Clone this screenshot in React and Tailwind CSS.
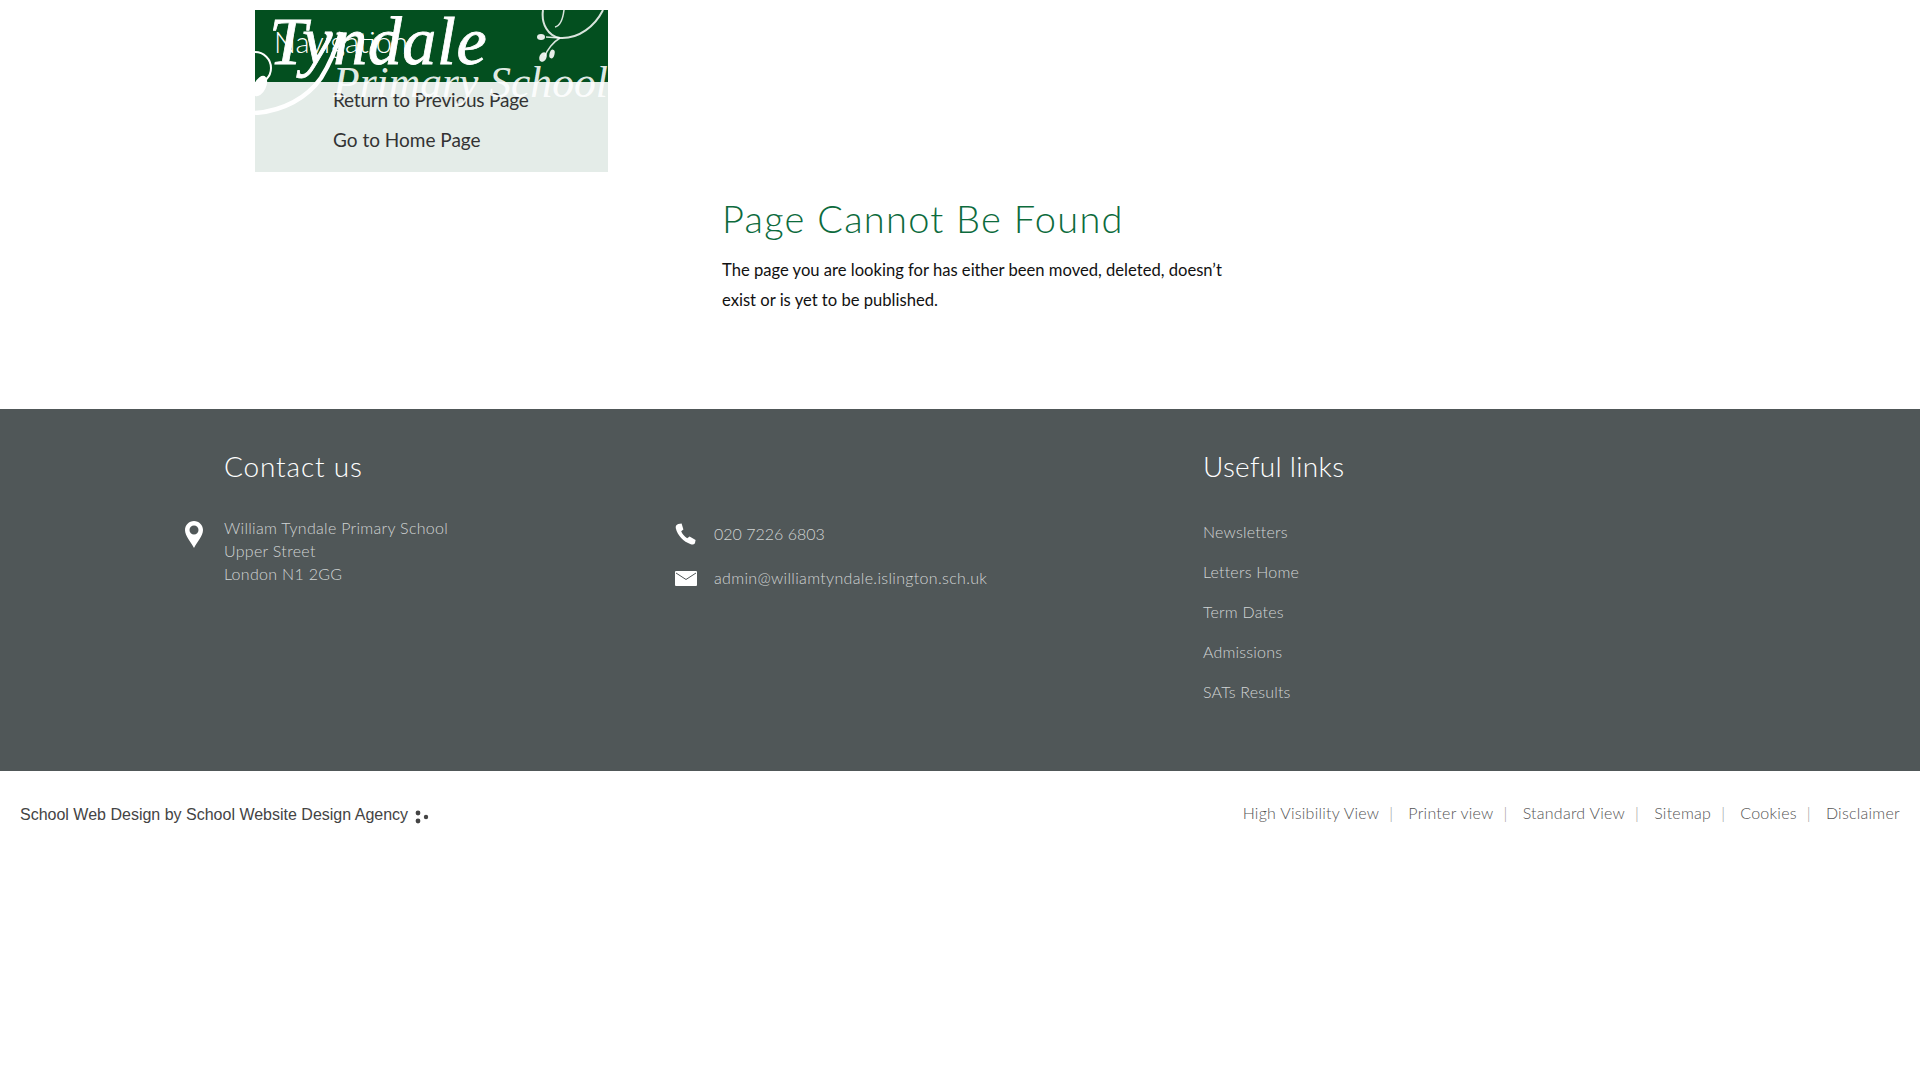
const usefulLinks = ['Newsletters', 'Letters Home', 'Term Dates', 'Admissions', 'SATs Results']
const legalLinks = ['High Visibility View', 'Printer view', 'Standard View', 'Sitemap', 'Cookies', 'Disclaimer']

function Logo() {
  return (
    <svg className="absolute left-[255px] top-[10px] z-10" width="353" height="105" viewBox="0 0 353 105">
      <g fill="none" stroke="#fff">
        <path d="M0 103 C28 101 52 88 66 68 C76 52 82 36 86 22" strokeWidth="4.5" />
        <circle cx="0" cy="58" r="16" strokeWidth="2" />
        <path d="M288 0 C286 14 293 26 305 28 C324 29 340 16 348 0" strokeWidth="2" opacity="0.85" />
        <path d="M309 0 C308 8 305 16 300 17 M305 28 C298 32 292 40 290 46 M305 28 L291 27" strokeWidth="1.5" opacity="0.85" />
      </g>
      <g fill="#fff">
        <ellipse cx="5" cy="76" rx="6" ry="11" transform="rotate(25 5 76)" />
        <ellipse cx="286" cy="27" rx="4" ry="3" opacity="0.9" />
        <ellipse cx="288" cy="47" rx="3.5" ry="5" transform="rotate(25 288 47)" opacity="0.9" />
        <ellipse cx="297" cy="44" rx="2.5" ry="4.5" transform="rotate(15 297 44)" opacity="0.9" />
      </g>
      <text x="14" y="54" fill="#fff" stroke="#fff" strokeWidth="0.8" letterSpacing="0.6" fontFamily="'Liberation Serif', serif" fontStyle="italic" fontSize="68">Tyndale</text>
      <text x="78" y="87" fill="#fff" fillOpacity="0.9" fontFamily="'Liberation Serif', serif" fontStyle="italic" fontSize="43.6">Primary School</text>
    </svg>
  )
}

function Phone() {
  return (
    <svg width="22" height="22" viewBox="0 0 22 22" fill="#fff">
      <path d="M3.2 1 L6.6 0.6 L8.4 6.4 L6.2 8.2 C7.2 10.8 9.4 13.6 12.2 15.2 L14.6 13.6 L20.6 17 L20 20 C19.4 21.4 17.6 21.8 15.8 21.2 C8.4 18.6 2.6 12.4 0.8 5.2 C0.4 3.2 1.4 1.6 3.2 1 Z" />
    </svg>
  )
}

function Mail() {
  return (
    <svg width="22" height="15" viewBox="0 0 22 15">
      <rect width="22" height="15" rx="1" fill="#fff" />
      <path d="M1 2 L11 8.5 L21 2" fill="none" stroke="#505758" strokeWidth="1" />
    </svg>
  )
}

export default function App() {
  return (
    <div className="relative min-h-[1080px] bg-white font-['Lato',sans-serif] font-light">
      <Logo />

      <div className="flex h-[409px] pl-[255px]">
        <aside className="mt-[10px] h-[162px] w-[353px] bg-[#e4ece8]">
          <div className="h-[72px] bg-[#034f1f] pl-[19px] pt-[12px] text-[29px] leading-[40px] text-white">Navigation</div>
          <ul className="-mt-[2px] pl-[78px] text-[19px] font-normal leading-[40px] text-[#333]">
            <li className="tracking-[-0.2px]">Return to Previous Page</li>
            <li>Go to Home Page</li>
          </ul>
        </aside>
        <main className="ml-[114px] w-[520px] pt-[203px]">
          <h1 className="text-[38px] leading-[30px] tracking-[1.25px] text-[#0d6b3d]">Page Cannot Be Found</h1>
          <p className="mt-[22px] text-[16.6px] font-normal leading-[30px] text-[#111]">
            The page you are looking for has either been moved, deleted, doesn’t exist or is yet to be published.
          </p>
        </main>
      </div>

      <footer className="flex h-[362px] bg-[#505758] pl-[185px] pt-[39px] text-[16px] text-[#d0d4d4]">
        <div className="w-[490px]">
          <h2 className="pl-[39px] text-[28px] leading-[36px] tracking-[0.85px] text-white">Contact us</h2>
          <div className="mt-[32px] flex items-start">
            <svg className="mt-[5px] w-[39px] shrink-0" width="18" height="28" viewBox="0 0 18 28" preserveAspectRatio="xMinYMin">
              <path fillRule="evenodd" fill="#fff" d="M9 0 C14 0 18 4 18 9 C18 15 12 21 9 27 C6 21 0 15 0 9 C0 4 4 0 9 0 Z M9 4.5 A4.5 4.5 0 1 0 9 13.5 A4.5 4.5 0 1 0 9 4.5 Z" />
            </svg>
            <address className="not-italic leading-[23px] tracking-[0.3px]">
              William Tyndale Primary School<br />Upper Street<br />London N1 2GG
            </address>
          </div>
        </div>

        <div className="w-[528px] pt-[74px]">
          <div className="flex items-center">
            <div className="w-[39px]"><Phone /></div>
            <span>020 7226 6803</span>
          </div>
          <div className="mt-[20px] flex items-center">
            <div className="w-[39px]"><Mail /></div>
            <span className="tracking-[0.33px]">admin@williamtyndale.islington.sch.uk</span>
          </div>
        </div>

        <div>
          <h2 className="text-[28px] leading-[36px] tracking-[0.3px] text-white">Useful links</h2>
          <ul className="mt-[28px] leading-[40px] tracking-[0.2px]">
            {usefulLinks.map((link) => <li key={link}>{link}</li>)}
          </ul>
        </div>
      </footer>

      <div className="flex items-center justify-between px-[20px] pt-[30px]">
        <div className="flex items-center pt-[2px] font-['Liberation_Sans',sans-serif] text-[16px] font-normal text-[#444]">
          School Web Design by School Website Design Agency
          <svg className="ml-[7px] mt-[3px]" width="14" height="14" viewBox="0 0 14 14" fill="#444">
            <circle cx="3" cy="3" r="2.4" /><circle cx="3" cy="11" r="2.4" /><circle cx="11" cy="7" r="2.2" />
          </svg>
        </div>
        <ul className="flex pb-[2px] text-[16px] tracking-[0.25px] text-[#555]">
          {legalLinks.map((link, i) => (
            <li key={link} className="flex">
              {link}
              {i < legalLinks.length - 1 && <span className="ml-[10px] mr-[15px] text-[#999]">|</span>}
            </li>
          ))}
        </ul>
      </div>
    </div>
  )
}
